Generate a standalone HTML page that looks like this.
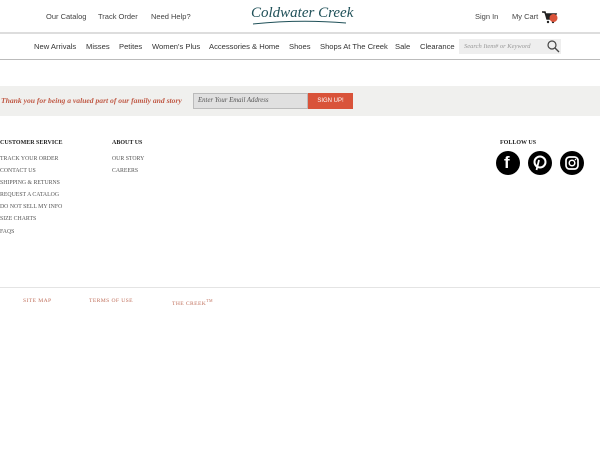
<!DOCTYPE html>
<html><head><style>
*{margin:0;padding:0;box-sizing:border-box}
body{width:600px;height:450px;background:#fff;position:relative;font-family:"Liberation Sans",sans-serif;overflow:hidden}
.a{position:absolute;white-space:nowrap}
.t{font-size:7.5px;color:#444;top:12px}
.n{font-size:7.6px;color:#333;top:42px}
.s{font-family:"Liberation Serif",serif;font-size:5.8px;color:#555}
.h{font-family:"Liberation Serif",serif;font-size:6px;color:#222;font-weight:bold}
.b{font-family:"Liberation Serif",serif;font-size:5.6px;color:#c0705c;top:298px;letter-spacing:.4px}
.ic{position:absolute;top:151px;width:24px;height:24px;border-radius:50%;background:#000}
</style></head><body>
<div class="a t" style="left:46px">Our Catalog</div>
<div class="a t" style="left:98px">Track Order</div>
<div class="a t" style="left:151px">Need Help?</div>
<div class="a" style="left:251px;top:5px;font-family:'Liberation Serif',serif;font-style:italic;font-size:15px;color:#1f5058">Coldwater Creek</div>
<svg class="a" style="left:250px;top:19px" width="100" height="8"><path d="M3 5 Q50 0 96 4" stroke="#1f5058" stroke-width="1" fill="none"/></svg>
<div class="a t" style="left:475px">Sign In</div>
<div class="a t" style="left:512px">My Cart</div>
<svg class="a" style="left:541px;top:10px" width="18" height="14"><path d="M1 2h3l2 7h7l2-5H5" fill="#222" stroke="#222" stroke-width="1.5"/><circle cx="7" cy="12" r="1.2" fill="#222"/><circle cx="12" cy="12" r="1.2" fill="#222"/><circle cx="12.5" cy="8" r="4" fill="#d9533a"/></svg>
<div class="a" style="left:0;top:32px;width:600px;height:2px;background:#ddd"></div>
<div class="a n" style="left:34px">New Arrivals</div>
<div class="a n" style="left:86px">Misses</div>
<div class="a n" style="left:119px">Petites</div>
<div class="a n" style="left:152px">Women's Plus</div>
<div class="a n" style="left:209px">Accessories &amp; Home</div>
<div class="a n" style="left:289px">Shoes</div>
<div class="a n" style="left:320px">Shops At The Creek</div>
<div class="a n" style="left:395px">Sale</div>
<div class="a n" style="left:420px">Clearance</div>
<div class="a" style="left:459px;top:39px;width:102px;height:15px;background:#eee"></div>
<div class="a" style="left:464px;top:43px;font-family:'Liberation Serif',serif;font-style:italic;font-size:6.5px;color:#999">Search Item# or Keyword</div>
<svg class="a" style="left:547px;top:40px" width="13" height="13"><circle cx="5" cy="5" r="4" stroke="#444" stroke-width="1.2" fill="none"/><path d="M8 8l4 4" stroke="#444" stroke-width="1.3"/></svg>
<div class="a" style="left:0;top:59px;width:600px;height:1px;background:#bbb"></div>
<div class="a" style="left:0;top:86px;width:600px;height:30px;background:#f0f0ee"></div>
<div class="a" style="left:1px;top:96px;font-family:'Liberation Serif',serif;font-style:italic;font-weight:bold;font-size:7.6px;color:#c05a46">Thank you for being a valued part of our family and story</div>
<div class="a" style="left:193px;top:93px;width:115px;height:16px;background:#e0e0e0;border:1px solid #bbb"></div>
<div class="a" style="left:198px;top:97px;font-family:'Liberation Serif',serif;font-style:italic;font-size:6.8px;color:#555">Enter Your Email Address</div>
<div class="a" style="left:308px;top:93px;width:45px;height:16px;background:#d9533a;color:#fff;font-size:6px;text-align:center;line-height:16px">SIGN UP!</div>
<div class="a h" style="left:0;top:140px">CUSTOMER SERVICE</div>
<div class="a h" style="left:112px;top:140px">ABOUT US</div>
<div class="a h" style="left:500px;top:140px">FOLLOW US</div>
<div class="a s" style="left:0;top:156px">TRACK YOUR ORDER</div>
<div class="a s" style="left:0;top:168px">CONTACT US</div>
<div class="a s" style="left:0;top:180px">SHIPPING &amp; RETURNS</div>
<div class="a s" style="left:0;top:192px">REQUEST A CATALOG</div>
<div class="a s" style="left:0;top:204px">DO NOT SELL MY INFO</div>
<div class="a s" style="left:0;top:216px">SIZE CHARTS</div>
<div class="a s" style="left:0;top:229px">FAQS</div>
<div class="a s" style="left:112px;top:156px">OUR STORY</div>
<div class="a s" style="left:112px;top:168px">CAREERS</div>
<div class="ic" style="left:496px"><div class="a" style="left:8px;top:2px;color:#fff;font-weight:bold;font-size:17px">f</div></div>
<div class="ic" style="left:528px"><svg width="24" height="24"><circle cx="12" cy="11" r="5.5" fill="none" stroke="#fff" stroke-width="2"/><path d="M11 9l-2.5 10" stroke="#fff" stroke-width="1.8"/></svg></div>
<div class="ic" style="left:560px"><svg width="24" height="24"><rect x="6" y="6" width="12" height="12" rx="3.5" fill="none" stroke="#fff" stroke-width="1.7"/><circle cx="12" cy="12" r="2.8" fill="none" stroke="#fff" stroke-width="1.5"/><circle cx="15.5" cy="8.5" r=".8" fill="#fff"/></svg></div>
<div class="a" style="left:0;top:287px;width:600px;height:1px;background:#e4e4e4"></div>
<div class="a b" style="left:23px">SITE MAP</div>
<div class="a b" style="left:89px">TERMS OF USE</div>
<div class="a b" style="left:172px">THE CREEK<sup style="font-size:4px">TM</sup></div>
</body></html>
